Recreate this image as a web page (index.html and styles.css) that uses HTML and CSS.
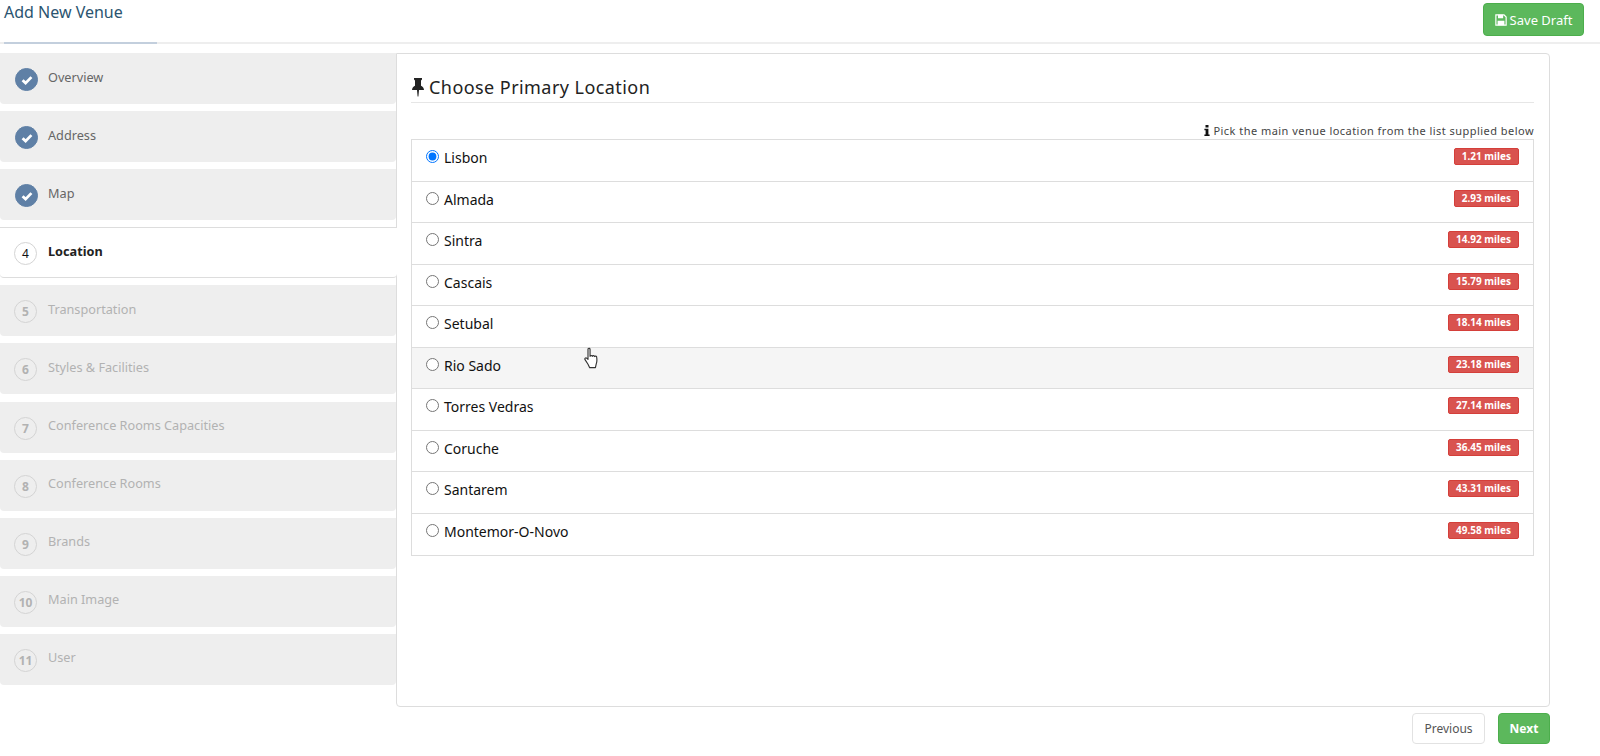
FILE: index.html
```html
<!DOCTYPE html>
<html lang="en">
<head>
    <meta charset="UTF-8">
    <title>Add New Venue</title>
    <link rel="stylesheet" href="styles.css">
</head>
<body>
    <header class="topbar">
        <h1 class="page-title">Add New Venue</h1>
        <span class="title-rule"></span>
        <button class="btn btn-green btn-save">
            <svg class="save-icon" viewBox="0 0 14 14"><path fill="none" stroke="currentColor" stroke-width="1.4" d="M1 1h9.5L13 3.5V13H1z"/><path fill="currentColor" d="M3.500 1h6v4h-6zM3 8h8v5H3z"/></svg>
            Save Draft
        </button>
    </header>

    <div class="layout">
        <nav class="steps">
            <a class="step done"><span class="step-num"><svg viewBox="0 0 12 12"><path fill="none" stroke="#fff" stroke-width="2.8" d="M1.600 6.200l3 2.900 5.800-6"/></svg></span><span class="step-label">Overview</span></a>
            <a class="step done"><span class="step-num"><svg viewBox="0 0 12 12"><path fill="none" stroke="#fff" stroke-width="2.8" d="M1.600 6.200l3 2.900 5.800-6"/></svg></span><span class="step-label">Address</span></a>
            <a class="step done"><span class="step-num"><svg viewBox="0 0 12 12"><path fill="none" stroke="#fff" stroke-width="2.8" d="M1.600 6.200l3 2.900 5.800-6"/></svg></span><span class="step-label">Map</span></a>
            <a class="step active"><span class="step-num">4</span><span class="step-label">Location</span></a>
            <a class="step"><span class="step-num">5</span><span class="step-label">Transportation</span></a>
            <a class="step"><span class="step-num">6</span><span class="step-label">Styles &amp; Facilities</span></a>
            <a class="step"><span class="step-num">7</span><span class="step-label">Conference Rooms Capacities</span></a>
            <a class="step"><span class="step-num">8</span><span class="step-label">Conference Rooms</span></a>
            <a class="step"><span class="step-num">9</span><span class="step-label">Brands</span></a>
            <a class="step"><span class="step-num">10</span><span class="step-label">Main Image</span></a>
            <a class="step"><span class="step-num">11</span><span class="step-label">User</span></a>
        </nav>

        <div class="content">
            <main class="panel">
                <h2 class="panel-title">
                    <svg class="pin-icon" viewBox="0 0 14 19"><path fill="#222" d="M3 0h8v1.600L10 2.400v5.400c1.800 1 3 2.400 3 4.200H8l-.6 6.500h-.8L6 12H1c0-1.800 1.200-3.200 3-4.200V2.400L3 1.600z"/></svg>
                    Choose Primary Location
                </h2>
                <p class="hint">
                    <svg class="info-icon" viewBox="0 0 6 11"><path fill="#111" d="M1.500 0h3v2.400h-3zM.4 3.800h4v5.700h1.200V11H.4V9.500h1.200V5.300H.4z"/></svg>
                    Pick the main venue location from the list supplied below
                </p>
                <ul class="venue-list">
                    <li class="venue-row"><label><input type="radio" name="location" checked>Lisbon</label><span class="miles">1.21 miles</span></li>
                    <li class="venue-row"><label><input type="radio" name="location">Almada</label><span class="miles">2.93 miles</span></li>
                    <li class="venue-row"><label><input type="radio" name="location">Sintra</label><span class="miles">14.92 miles</span></li>
                    <li class="venue-row"><label><input type="radio" name="location">Cascais</label><span class="miles">15.79 miles</span></li>
                    <li class="venue-row"><label><input type="radio" name="location">Setubal</label><span class="miles">18.14 miles</span></li>
                    <li class="venue-row hover"><label><input type="radio" name="location">Rio Sado</label><span class="miles">23.18 miles</span></li>
                    <li class="venue-row"><label><input type="radio" name="location">Torres Vedras</label><span class="miles">27.14 miles</span></li>
                    <li class="venue-row"><label><input type="radio" name="location">Coruche</label><span class="miles">36.45 miles</span></li>
                    <li class="venue-row"><label><input type="radio" name="location">Santarem</label><span class="miles">43.31 miles</span></li>
                    <li class="venue-row"><label><input type="radio" name="location">Montemor-O-Novo</label><span class="miles">49.58 miles</span></li>
                </ul>
            </main>
            <div class="pager">
                <button class="btn btn-white">Previous</button>
                <button class="btn btn-green">Next</button>
            </div>
        </div>
    </div>

    <svg class="cursor" viewBox="0 0 14 20"><path fill="#fff" stroke="#333" stroke-width="1" stroke-linejoin="round" d="M3.500 1.500c.8-.8 1.800-.4 1.800.6v6c.3-1 1.800-1 2 0 .3-.9 1.800-.8 2 .2.400-.7 1.700-.5 1.800.5.300 2.200.4 4.200-.4 6l-.7 3.200H5l-1.500-3L.9 11c-.5-1 .5-2 1.500-1.300l1.100 1z"/></svg>
</body>
</html>
```

FILE: styles.css
```css
* {
    box-sizing: border-box;
    margin: 0;
    padding: 0;
}
body {
    position: relative;
    height: 756px;
    overflow: hidden;
    font-family: 'Noto Sans', 'DejaVu Sans', sans-serif;
    background-color: #fff;
    color: #111;
}
.topbar {
    position: relative;
    display: flex;
    justify-content: space-between;
    align-items: flex-start;
    height: 44px;
    padding: 3px 16px 0 4px;
    border-bottom: 2px solid #eee;
}
.page-title {
    font-size: 16px;
    font-weight: normal;
    line-height: 18px;
    color: #2b5470;
}
.title-rule {
    position: absolute;
    left: 4px;
    bottom: -2px;
    width: 153px;
    height: 2px;
    background-color: #c3cfdd;
}
.btn {
    height: 33px;
    border-radius: 4px;
    font-family: inherit;
    font-size: 12px;
    cursor: pointer;
}
.btn-green {
    background-color: #5cb85c;
    border: 1px solid #4cae4c;
    color: #fff;
}
.btn-white {
    background-color: #fff;
    border: 1px solid #e2e2e2;
    color: #555;
}
.btn-save {
    display: flex;
    align-items: center;
    justify-content: center;
    gap: 3px;
    width: 101px;
    font-size: 13px;
}
.save-icon {
    width: 12px;
    height: 12px;
}
.layout {
    display: flex;
    align-items: flex-start;
    padding-top: 9px;
}
.steps {
    display: flex;
    flex-direction: column;
    gap: 7.100px;
    width: 396px;
    flex: none;
}
.step {
    display: flex;
    align-items: center;
    height: 51px;
    padding-left: 14px;
    background-color: #eee;
    border-radius: 0 0 4px 4px;
    font-size: 12.700px;
    color: #b2b2b2;
}
.step-label {
    margin-bottom: 4px;
}
.step-num {
    display: flex;
    align-items: center;
    justify-content: center;
    width: 23px;
    height: 23px;
    margin: 2px 11px 0 0;
    border: 1px solid #d4d4d4;
    border-radius: 50%;
    font-size: 12px;
    font-weight: bold;
    flex: none;
}
.step.done {
    padding-left: 15px;
    color: #666;
}
.step.done .step-num {
    margin-right: 10px;
    background-color: #5f80a6;
    border-color: #5f80a6;
}
.step.done .step-num svg {
    width: 12px;
    height: 12px;
}
.step.active {
    position: relative;
    width: 397px;
    background-color: #fff;
    border-top: 1px solid #ddd;
    border-bottom: 1px solid #ddd;
    font-weight: bold;
    color: #222;
    z-index: 1;
}
.step.active .step-num {
    font-weight: normal;
    color: #111;
}
.content {
    width: 1154px;
}
.panel {
    height: 654px;
    padding: 20px 15px 0 14px;
    border: 1px solid #ddd;
    border-radius: 0 4px 4px 4px;
}
.panel-title {
    display: flex;
    align-items: center;
    gap: 4px;
    height: 29px;
    border-bottom: 1px solid #e6e6e6;
    padding-bottom: 2px;
    font-size: 18px;
    font-weight: normal;
    letter-spacing: 0.44px;
    color: #222;
}
.pin-icon {
    width: 14px;
    height: 19px;
}
.hint {
    display: flex;
    align-items: center;
    justify-content: flex-end;
    gap: 3px;
    height: 18px;
    margin-top: 18px;
    font-size: 11px;
    letter-spacing: 0.46px;
    color: #444;
}
.info-icon {
    width: 6px;
    height: 11px;
}
.venue-list {
    list-style: none;
    border: 1px solid #ddd;
}
.venue-row {
    display: flex;
    justify-content: space-between;
    align-items: flex-start;
    height: 41.500px;
    padding: 8px 14px 0;
    border-bottom: 1px solid #ddd;
    font-size: 14px;
}
.venue-row:last-child {
    border-bottom: none;
}
.venue-row.hover {
    background-color: #f5f5f5;
}
.venue-row label {
    display: flex;
    align-items: flex-start;
    line-height: 20px;
}
.venue-row input {
    width: 13px;
    height: 13px;
    margin: 2px 5px 0 0;
}
.miles {
    height: 17px;
    padding: 0 7px;
    background-color: #d9534f;
    border: 1px solid #d43f3a;
    border-radius: 2px;
    font-size: 10px;
    font-weight: bold;
    line-height: 14px;
    color: #fff;
}
.pager {
    display: flex;
    justify-content: flex-end;
    gap: 13px;
    padding-top: 6px;
}
.pager .btn-white {
    width: 73px;
    height: 31px;
}
.pager .btn-green {
    width: 52px;
    height: 31px;
    font-weight: bold;
}
.cursor {
    position: absolute;
    left: 584px;
    top: 347px;
    width: 16px;
    height: 23px;
}
```
